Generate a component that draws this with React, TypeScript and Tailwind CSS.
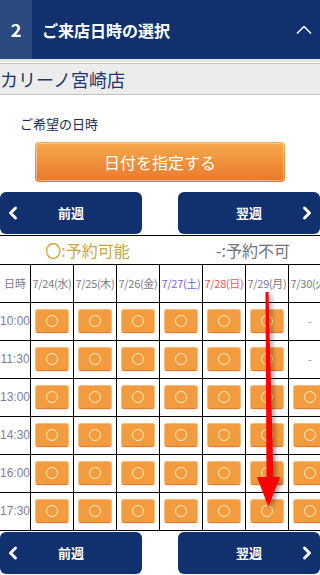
import { ChevronLeft, ChevronRight } from "lucide-react"

const dates = [
  { label: "7/24(水)", color: "text-[#7a7a88]" },
  { label: "7/25(木)", color: "text-[#7a7a88]" },
  { label: "7/26(金)", color: "text-[#7a7a88]" },
  { label: "7/27(土)", color: "text-[#7b5bf5]" },
  { label: "7/28(日)", color: "text-[#ff4d4d]" },
  { label: "7/29(月)", color: "text-[#7a7a88]" },
  { label: "7/30(火)", color: "text-[#7a7a88]" },
]

const times = ["10:00", "11:30", "13:00", "14:30", "16:00", "17:30"]

// 7/30 is closed in the morning
const isOpen = (row: number, col: number) => !(col === 6 && row < 2)

function SlotButton() {
  return (
    <div className="flex h-[24px] w-[34px] items-center justify-center rounded-[3px] border border-[#f7bb7b] border-b-[#e9792b] bg-[#f39b3f] shadow-[0_1px_0_rgba(0,0,0,0.08)]">
      <div className="h-[12px] w-[12px] rounded-full border-[1.5px] border-[#fff0bd]" />
    </div>
  )
}

function WeekButton({ label, dir }: { label: string; dir: "prev" | "next" }) {
  return (
    <button className="relative flex h-[42px] w-[142px] items-center justify-center rounded-[6px] bg-[#10316e] text-[13px] font-bold text-white">
      {dir === "prev" && <ChevronLeft className="absolute left-[3px] h-[20px] w-[20px]" strokeWidth={3.5} />}
      <span>{label}</span>
      {dir === "next" && <ChevronRight className="absolute right-[3px] h-[20px] w-[20px]" strokeWidth={3.5} />}
    </button>
  )
}

export default function App() {
  return (
    <div className="relative h-[575px] w-[320px] overflow-hidden bg-white font-['Noto_Sans_CJK_JP','Liberation_Sans',sans-serif]">
      {/* section header */}
      <div className="flex h-[59px] items-center bg-[#10316e] text-white">
        <div className="flex h-full w-[32px] items-center justify-center bg-[#2b4a7f] text-[18px] font-bold">2</div>
        <div className="ml-[10px] flex-1 text-[16px] font-bold">ご来店日時の選択</div>
        <svg width="16" height="10" viewBox="0 0 16 10" className="mr-[8px]">
          <polyline points="1,8.5 8,1.5 15,8.5" fill="none" stroke="white" strokeWidth="1.5" />
        </svg>
      </div>
      <div className="h-[3px] bg-[#e4e4e4]" />
      <div className="h-[1px] bg-white" />
      <div className="flex h-[32px] items-center border-y border-[#c4c4c4] bg-[#ececec] text-[18px] leading-none text-[#23356e]">
        カリーノ宮崎店
      </div>

      <div className="mt-[19px] pl-[20px] text-[13px] text-[#1d2b5c]">ご希望の日時</div>

      <div className="mt-[8px] flex justify-center">
        <button className="h-[40px] w-[250px] rounded-[4px] bg-gradient-to-b from-[#f6aa4c] to-[#eb772b] p-[1px]">
          <div className="flex h-full items-center justify-center rounded-[3px] border border-white/40 text-[16px] text-white">
            日付を指定する
          </div>
        </button>
      </div>

      <div className="mt-[10px] flex justify-between">
        <WeekButton label="前週" dir="prev" />
        <WeekButton label="翌週" dir="next" />
      </div>

      {/* calendar table */}
      <div className="mt-[1px] w-[331px] border-t border-black">
        <div className="flex h-[29px] items-center border-b border-black text-[16px]">
          <div className="w-[175px] text-center text-[#c9a53e]">〇:予約可能</div>
          <div className="flex-1 text-center text-[#6e7180]">-:予約不可</div>
        </div>
        <div className="flex h-[38px] border-b border-black">
          <div className="flex w-[31px] shrink-0 items-center justify-center border-r border-black text-[11px] text-[#7a7a88]">日時</div>
          {dates.map((d) => (
            <div
              key={d.label}
              className={`flex w-[43px] shrink-0 items-center justify-center overflow-visible whitespace-nowrap border-r border-black text-[11px] tracking-[-0.3px] ${d.color}`}
            >
              {d.label}
            </div>
          ))}
        </div>
        {times.map((t, r) => (
          <div key={t} className="flex h-[38px] border-b border-black">
            <div className="flex w-[31px] shrink-0 items-center justify-center border-r border-black font-['Liberation_Sans',sans-serif] text-[12px] text-[#7b80a0]">
              {t}
            </div>
            {dates.map((d, c) => (
              <div key={d.label} className="flex w-[43px] shrink-0 items-center justify-center border-r border-black">
                {isOpen(r, c) ? <SlotButton /> : <span className="text-[11px] text-[#8a8a95]">-</span>}
              </div>
            ))}
          </div>
        ))}
      </div>

      <div className="mt-[1px] flex justify-between">
        <WeekButton label="前週" dir="prev" />
        <WeekButton label="翌週" dir="next" />
      </div>

      {/* annotation arrow */}
      <svg className="pointer-events-none absolute left-0 top-0" width="320" height="575" viewBox="0 0 320 575">
        <defs>
          <filter id="sh" x="-50%" y="-10%" width="200%" height="120%">
            <feDropShadow dx="3" dy="2" stdDeviation="2" floodColor="#000" floodOpacity="0.35" />
          </filter>
        </defs>
        <g filter="url(#sh)">
          <polygon points="265.5,292 268.5,292 273.5,479 266.5,479" fill="#ff0000" />
          <polygon points="257,477 280,477 268.5,507" fill="#ff0000" />
        </g>
      </svg>
    </div>
  )
}
